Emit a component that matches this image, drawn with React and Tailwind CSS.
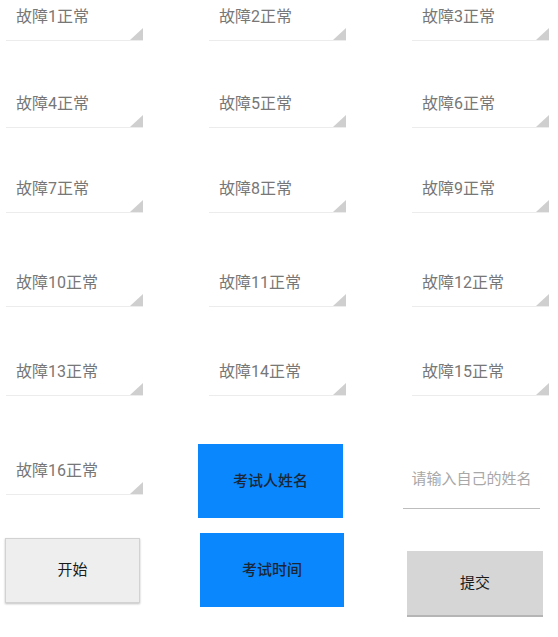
const font = { fontFamily: "Roboto, 'Noto Sans CJK SC', sans-serif" };

const Spinner = ({ label }) => (
  <div className="relative h-[41px] w-[137px] border-b border-[#ececec]">
    <div className="pl-[10px] pt-[6px] text-[16px] leading-[22px] text-[#777777]">{label}</div>
    <svg className="absolute right-0 bottom-0" width="13" height="12" viewBox="0 0 13 12">
      <polygon points="13,0 13,12 0,12" fill="#cfcfcf" />
    </svg>
  </div>
);

const rows = [
  { mt: "mt-0", items: [1, 2, 3] },
  { mt: "mt-[46px]", items: [4, 5, 6] },
  { mt: "mt-[44px]", items: [7, 8, 9] },
  { mt: "mt-[53px]", items: [10, 11, 12] },
  { mt: "mt-[48px]", items: [13, 14, 15] },
];

export default function App() {
  return (
    <div className="w-[558px] h-[637px] bg-white overflow-hidden" style={font}>
      {rows.map((row) => (
        <div key={row.items[0]} className={`flex gap-[66px] pl-[6px] ${row.mt}`}>
          {row.items.map((n) => (
            <Spinner key={n} label={`故障${n}正常`} />
          ))}
        </div>
      ))}

      <div className="flex mt-[48px]">
        <div className="w-[198px] flex flex-col">
          <div className="mt-[10px] pl-[6px]">
            <Spinner label="故障16正常" />
          </div>
          <button className="mt-[43px] ml-[5px] w-[135px] h-[65px] bg-[#eeeeee] border border-[#d2d2d2] shadow-[0_1px_2px_rgba(0,0,0,0.25)] text-[15px] text-[#1a1a1a]">
            开始
          </button>
        </div>

        <div className="w-[205px] flex flex-col">
          <button className="w-[145px] h-[74px] bg-[#0a87fc] text-[15px] font-medium text-[#1a2636]">
            考试人姓名
          </button>
          <button className="mt-[15px] ml-[2px] w-[144px] h-[74px] bg-[#0a87fc] text-[15px] font-medium text-[#1a2636]">
            考试时间
          </button>
        </div>

        <div className="flex flex-col">
          <div className="mt-[11px] w-[137px] h-[54px] border-b border-[#bdbdbd] flex items-center justify-center text-[15px] text-[#a8a8a8] pb-[5px]">
            请输入自己的姓名
          </div>
          <button className="mt-[42px] ml-[4px] w-[136px] h-[66px] bg-[#d6d6d6] border-b-2 border-[#b5b5b5] text-[15px] text-[#1a1a1a]">
            提交
          </button>
        </div>
      </div>
    </div>
  );
}
